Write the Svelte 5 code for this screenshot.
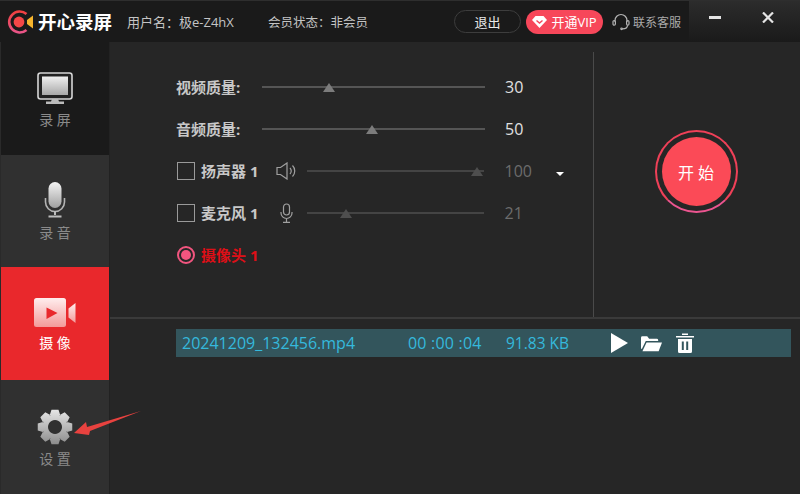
<script>
  const sliders = [
    { label: '视频质量:', value: 30, thumb: 30 },
    { label: '音频质量:', value: 50, thumb: 49.5 },
  ]

  const nav = [
    { id: 'screen', label: '录 屏' },
    { id: 'audio', label: '录 音' },
    { id: 'camera', label: '摄 像' },
    { id: 'settings', label: '设 置' },
  ]

  // gear outline with 8 teeth, centre 18,18
  function gearPath() {
    let pts = []
    for (let i = 0; i < 8; i++) {
      const a = (i * Math.PI) / 4 - Math.PI / 2
      const around = [[-0.44, 12.6], [-0.2, 17.6], [0.2, 17.6], [0.44, 12.6]]
      for (const [d, r] of around) {
        pts.push((18 + r * Math.cos(a + d)).toFixed(2) + ' ' + (18 + r * Math.sin(a + d)).toFixed(2))
      }
    }
    return 'M' + pts.join('L') + 'Z M18 11a7 7 0 1 0 .01 0Z'
  }
</script>

<div class="window">
  <header class="top">
    <div class="brand">
      <svg width="27" height="24" viewBox="0 0 27 24">
        <defs>
          <linearGradient id="ring" x1="0" y1="0" x2="0" y2="1">
            <stop offset="0" stop-color="#f04040" />
            <stop offset="1" stop-color="#ea5588" />
          </linearGradient>
        </defs>
        <path d="M19.500 4a10.500 10.500 0 1 0 0 16" fill="none" stroke="url(#ring)" stroke-width="2.600" />
        <circle cx="12" cy="12" r="5.400" fill="#f44747" />
        <path d="M20 10l6-4.500v13L20 14z" fill="#f6b52e" />
      </svg>
      <strong>开心录屏</strong>
    </div>
    <span class="user">用户名：极e-Z4hX</span>
    <span class="member">会员状态：非会员</span>

    <button class="logout">退出</button>
    <button class="vip">
      <svg width="15" height="12" viewBox="0 0 15 12">
        <path d="M3.500 0h8L15 4l-7.500 8L0 4z" fill="#fff" />
        <path d="M4.500 4.500l3 2.600 3-2.600" fill="none" stroke="#f7475a" stroke-width="1.400" />
      </svg>
      开通VIP
    </button>
    <div class="service">
      <svg width="18" height="18" viewBox="0 0 18 18" fill="none" stroke="#b4b4b4" stroke-width="1.200">
        <path d="M3 9V7.500a6 6 0 0 1 12 0V9" />
        <rect x="1" y="7.500" width="2.400" height="4.600" rx="1.200" />
        <rect x="14.600" y="7.500" width="2.400" height="4.600" rx="1.200" />
        <path d="M15.500 12.200c0 2.600-2.400 3.600-5 3.600" />
        <circle cx="9.600" cy="15.800" r=".8" />
      </svg>
      <span>联系客服</span>
    </div>
    <div class="winctl">
      <span class="min"></span>
      <svg width="12" height="11" viewBox="0 0 12 11"><path d="M1 .5l10 10M11 .5l-10 10" stroke="#e4e4e4" stroke-width="2.200" /></svg>
    </div>
  </header>

  <div class="body">
    <nav class="side">
      {#each nav as item}
        <div class="item {item.id}">
          {#if item.id === 'screen'}
            <svg width="36" height="33" viewBox="0 0 36 33">
              <defs>
                <linearGradient id="silver" x1="0" y1="0" x2="0" y2="1">
                  <stop offset="0" stop-color="#f0f0f0" />
                  <stop offset="1" stop-color="#a8a8a8" />
                </linearGradient>
              </defs>
              <rect x="1" y="1" width="34" height="26" rx="2.500" fill="#222" stroke="#d6d6d6" stroke-width="1.600" />
              <rect x="5" y="4.500" width="26" height="18.500" fill="url(#silver)" />
              <path d="M15 27h6l1 2.500h5V32H9v-2.500h5z" fill="#bbb" />
            </svg>
          {:else if item.id === 'audio'}
            <svg width="22" height="36" viewBox="0 0 22 36">
              <defs>
                <linearGradient id="micfill" x1="0" y1="0" x2="0" y2="1">
                  <stop offset="0" stop-color="#f4f4f4" />
                  <stop offset="1" stop-color="#a0a0a0" />
                </linearGradient>
              </defs>
              <rect x="4.500" y="0" width="13" height="26" rx="6.500" fill="url(#micfill)" />
              <path d="M1.500 16v4a9.500 9.500 0 0 0 19 0v-4" fill="none" stroke="#b4b4b4" stroke-width="1.600" />
              <path d="M11 29v4M4.500 34.500h13" stroke="#bdbdbd" stroke-width="2" />
            </svg>
          {:else if item.id === 'camera'}
            <svg width="42" height="30" viewBox="0 0 42 30">
              <defs>
                <linearGradient id="camfill" x1="0" y1="0" x2="0" y2="1">
                  <stop offset="0" stop-color="#ffeeee" />
                  <stop offset="1" stop-color="#f39a9a" />
                </linearGradient>
              </defs>
              <rect x="0" y="0" width="32" height="29" rx="2.500" fill="url(#camfill)" />
              <path d="M34.500 10.500L41.500 5V25L34.500 19.500z" fill="url(#camfill)" />
              <path d="M12.500 9.500L23.500 15L12.500 21z" fill="#e9282c" />
            </svg>
          {:else}
            <svg width="36" height="36" viewBox="0 0 36 36">
              <defs>
                <linearGradient id="gearfill" x1="0" y1="0" x2="0" y2="1">
                  <stop offset="0" stop-color="#e6e6e6" />
                  <stop offset="1" stop-color="#8c8c8c" />
                </linearGradient>
              </defs>
              <path d={gearPath()} fill="url(#gearfill)" fill-rule="evenodd" />
            </svg>
          {/if}
          <span>{item.label}</span>
        </div>
      {/each}
    </nav>

    <main class="main">
      <section class="controls">
        <div class="form">
          {#each sliders as s}
            <div class="row">
              <span class="label wide">{s.label}</span>
              <div class="track long">
                <i class="thumb" style="left: {s.thumb}%"></i>
              </div>
              <span class="val">{s.value}</span>
            </div>
          {/each}

          <div class="row off">
            <span class="box"></span>
            <span class="label">扬声器 1</span>
            <svg class="dev" width="21" height="18" viewBox="0 0 21 18" fill="none" stroke="#a0a0a0" stroke-width="1.200">
              <path d="M1 5.500h3.500L11 1v16L4.500 12.500H1z" />
              <path d="M14 6c1.500 1.800 1.500 4.200 0 6M16.500 3.500c3 3 3 8 0 11" />
            </svg>
            <div class="track short">
              <i class="thumb" style="left: 96%"></i>
            </div>
            <span class="val">100</span>
            <i class="caret"></i>
          </div>

          <div class="row off">
            <span class="box"></span>
            <span class="label">麦克风 1</span>
            <svg class="dev" width="21" height="20" viewBox="0 0 21 20" fill="none" stroke="#a0a0a0" stroke-width="1.200">
              <rect x="7.500" y="1" width="6" height="11" rx="3" />
              <path d="M5 9v1a5.500 5.500 0 0 0 11 0V9M10.500 15.500V19M7 19.400h7" />
            </svg>
            <div class="track short">
              <i class="thumb" style="left: 22%"></i>
            </div>
            <span class="val">21</span>
          </div>

          <div class="row cam">
            <span class="radio"><i></i></span>
            <span class="label">摄像头 1</span>
          </div>
        </div>

        <div class="start-pane">
          <button class="start"><span>开 始</span></button>
        </div>
      </section>

      <section class="files">
        <div class="file">
          <span class="name">20241209_132456.mp4</span>
          <span class="dur">00 :00 :04</span>
          <span class="size">91.83 KB</span>
          <div class="actions">
            <svg width="18" height="20" viewBox="0 0 18 20"><path d="M1 0l17 10L1 20z" fill="#fff" /></svg>
            <svg width="21" height="17" viewBox="0 0 22 17">
              <path d="M0 2.500A1.500 1.500 0 0 1 1.500 1h5l2 2.500h8A1.500 1.500 0 0 1 18 5v1H5L1 14H0z" fill="#fff" />
              <path d="M5.800 7.500H22l-3.500 9H1.500z" fill="#fff" />
            </svg>
            <svg width="20" height="20" viewBox="0 0 20 20">
              <path d="M1 3h18v1.500H1zM7 .5h6V2H7z" fill="#fff" />
              <path fill-rule="evenodd" d="M3 6h14v12.500a1.500 1.500 0 0 1-1.500 1.500h-11A1.500 1.500 0 0 1 3 18.500zM6.800 8.500v8.500h2V8.500zM11.200 8.500v8.500h2V8.500z" fill="#fff" />
            </svg>
          </div>
        </div>
      </section>
    </main>
  </div>

  <!-- annotation drawn over the shot -->
  <svg class="note" width="150" height="40" viewBox="70 405 150 40">
    <path d="M74 433L86 422L87 427L141 411L90 431L89 435z" fill="#e8423f" />
  </svg>
</div>

<style>
  :global(body) {
    margin: 0;
    background: #262626;
  }

  * {
    box-sizing: border-box;
  }

  .window {
    position: relative;
    width: 800px;
    height: 494px;
    display: flex;
    flex-direction: column;
    background: #262626;
    overflow: hidden;
    font-family: "Open Sans", "Noto Sans CJK SC", sans-serif;
  }

  .top {
    height: 42px;
    flex: none;
    display: flex;
    align-items: center;
    background: #1a1a1a;
    border-top: 1px solid #2e2e2e;
    color: #c4c4c4;
    font-size: 12.5px;
  }

  .brand {
    display: flex;
    align-items: center;
    width: 127px;
    padding-left: 7px;
    color: #fff;
    font-size: 18.500px;
    line-height: 24px;
  }

  .brand strong {
    margin-left: 4px;
    font-weight: 700;
    white-space: nowrap;
  }

  .user {
    width: 141px;
    font-size: 13px;
  }

  .member {
    width: 186px;
  }

  .logout {
    width: 67px;
    height: 23px;
    margin-right: 5px;
    padding: 0;
    border: 1px solid #3d3d3d;
    border-radius: 12px;
    background: #1a1a1a;
    color: #e8e8e8;
    font: inherit;
    font-size: 13px;
  }

  .vip {
    width: 77px;
    height: 24px;
    display: flex;
    align-items: center;
    justify-content: center;
    gap: 4px;
    padding: 0;
    border: 0;
    border-radius: 12px;
    background: #f7475a;
    color: #fff;
    font: inherit;
    font-size: 13px;
  }

  .service {
    display: flex;
    align-items: center;
    gap: 3px;
    width: 86px;
    padding-left: 9px;
    font-size: 12px;
    color: #aaa;
    white-space: nowrap;
  }

  .winctl {
    align-self: stretch;
    flex: 1;
    display: flex;
    align-items: flex-start;
    gap: 41px;
    padding: 11px 0 0 20px;
    background: linear-gradient(#2c2c2c, #1a1a1a);
  }

  .min {
    width: 12px;
    height: 3px;
    margin-top: 4px;
    background: #e4e4e4;
  }

  .body {
    flex: 1;
    display: flex;
    min-height: 0;
  }

  .side {
    width: 110px;
    flex: none;
    display: grid;
    grid-template-rows: 113px 112px 113px 114px;
    border-left: 1px solid #2a2a2a;
    border-right: 1px solid #222;
  }

  .item {
    display: flex;
    flex-direction: column;
    align-items: center;
    background: #303030;
    color: #8a8a8a;
    font-size: 14px;
    line-height: 20px;
  }

  .item span {
    white-space: pre;
  }

  .screen {
    background: #1a1a1a;
    padding-top: 30px;
    gap: 5px;
  }

  .audio {
    padding-top: 27px;
    gap: 5px;
  }

  .camera {
    background: #e9282c;
    color: #fff;
    padding-top: 31px;
    gap: 5px;
  }

  .settings {
    padding-top: 29px;
    gap: 4px;
  }

  .main {
    flex: 1;
    display: flex;
    flex-direction: column;
    min-width: 0;
  }

  .controls {
    height: 277px;
    flex: none;
    display: flex;
    border-bottom: 2px solid #3a3a3a;
  }

  .form {
    width: 484px;
    flex: none;
    margin-top: 10px;
    padding: 14px 0 0 66px;
    border-right: 1px solid #4a4a4a;
    display: flex;
    flex-direction: column;
  }

  .row {
    height: 42px;
    flex: none;
    display: flex;
    align-items: center;
    color: #c8c8c8;
    font-size: 15px;
  }

  .label {
    font-weight: 700;
    white-space: nowrap;
    line-height: 20px;
  }

  .wide {
    width: 86px;
  }

  .box {
    width: 18px;
    height: 18px;
    margin: 0 6px 0 1px;
    border: 1px solid #9a9a9a;
  }

  .track {
    position: relative;
    height: 2px;
    background: #555;
  }

  .long {
    width: 223px;
  }

  .short {
    width: 177px;
    background: #444;
  }

  .dev {
    margin: 0 10px 0 18px;
  }

  .thumb {
    position: absolute;
    top: -3px;
    transform: translateX(-50%);
    border-style: solid;
    border-width: 0 6px 9px;
    border-color: transparent transparent #7c7c7c;
  }

  .short .thumb {
    border-bottom-color: #4e4e4e;
  }

  .val {
    margin-left: 20px;
    font-size: 16px;
    color: #e0e0e0;
  }

  .off .val {
    color: #6c6c6c;
  }

  .caret {
    margin-left: 24px;
    margin-top: 5px;
    border-style: solid;
    border-width: 4px 4px 0;
    border-color: #fff transparent transparent;
  }

  .radio {
    width: 18px;
    height: 18px;
    margin: 0 6px 0 1px;
    display: flex;
    align-items: center;
    justify-content: center;
    border: 2px solid #f2557f;
    border-radius: 50%;
  }

  .radio i {
    width: 10px;
    height: 10px;
    border-radius: 50%;
    background: #f2557f;
  }

  .cam .label {
    color: #dd0f17;
  }

  .start-pane {
    flex: 1;
    display: flex;
    justify-content: center;
    padding: 88px 2px 0 0;
  }

  .start {
    width: 83px;
    height: 83px;
    padding: 0;
    display: flex;
    align-items: center;
    justify-content: center;
    border: 2px solid #ef4058;
    border-bottom-color: #ec5590;
    border-radius: 50%;
    background: transparent;
  }

  .start span {
    width: 69px;
    height: 69px;
    display: flex;
    align-items: center;
    justify-content: center;
    border-radius: 50%;
    background: #fb4a57;
    color: #fff;
    font-size: 16px;
    font-family: "Open Sans", "Noto Sans CJK SC", sans-serif;
    white-space: pre;
  }

  .files {
    flex: 1;
    padding: 10px 9px 0 66px;
  }

  .file {
    height: 28px;
    display: flex;
    align-items: center;
    background: #33555c;
    color: #35b9dc;
    font-size: 16px;
    white-space: nowrap;
  }

  .name {
    width: 232px;
    padding-left: 6px;
  }

  .dur {
    width: 98px;
    letter-spacing: .2px;
  }

  .size {
    width: 104px;
    font-size: 15.500px;
  }

  .actions {
    display: flex;
    align-items: center;
    gap: 13px;
  }

  .note {
    position: absolute;
    left: 70px;
    top: 405px;
  }
</style>
